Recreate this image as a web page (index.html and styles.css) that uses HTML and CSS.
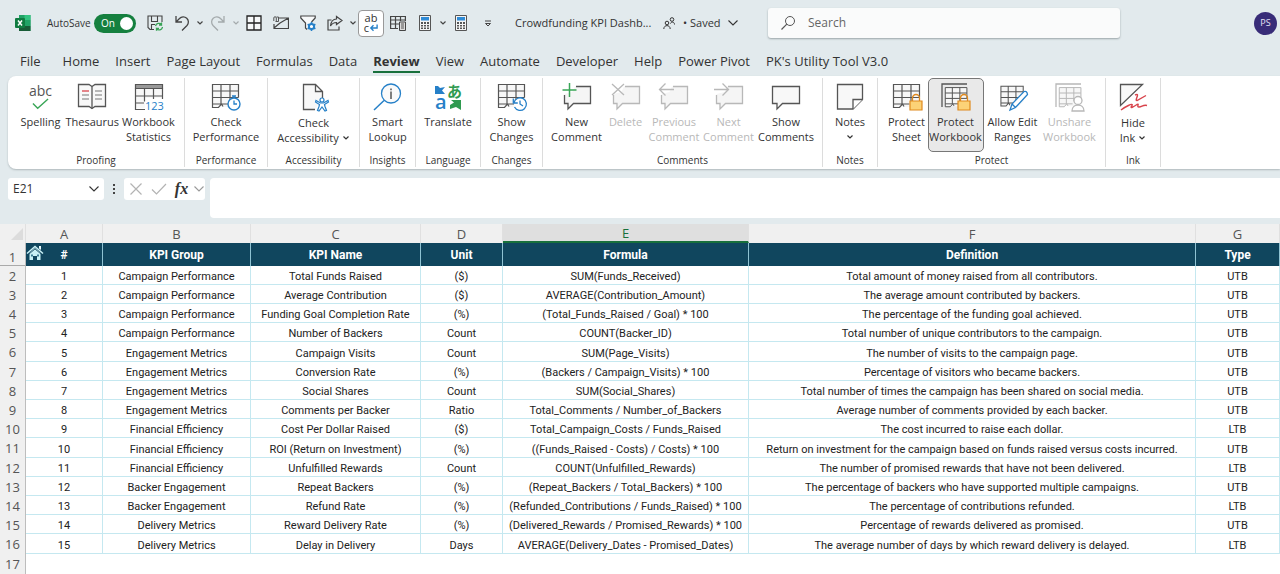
FILE: index.html
```html
<!DOCTYPE html>
<html lang="en">
<head>
<meta charset="utf-8">
<meta name="viewport" content="width=device-width, initial-scale=1">
<title>Crowdfunding KPI Dashboard</title>
<link rel="stylesheet" href="styles.css">
</head>
<body>
<svg class="defs" aria-hidden="true">
  <symbol id="chev" viewBox="0 0 8 8"><path d="M1.500 2.500 4 5l2.500-2.500" fill="none" stroke="currentColor" stroke-width="1.200"/></symbol>
  <symbol id="chev-lg" viewBox="0 0 12 12"><path d="M1.500 3.500 6 8l4.500-4.500" fill="none" stroke="currentColor" stroke-width="1.100"/></symbol>
  <symbol id="calc" viewBox="0 0 16 16"><path d="M2.500.5h11v15h-11z" fill="#f4f4f4" stroke="#555"/><path d="M4 2h8v3.500H4z" fill="#2f8bd6"/><path d="M4 7h2v2H4zm3 0h2v2H7zm3 0h2v2h-2zM4 10h2v1.500H4zm3 0h2v1.500H7zm3 0h2v1.500h-2zM4 12.500h2V14H4zm3 0h2V14H7zm3 0h2V14h-2z" fill="#555"/></symbol>
  <symbol id="grid-cut" viewBox="0 0 30 28"><path d="M2 1h26v18l-5 5H12l-2-1-3 1.500H2z" fill="#f7f7f7"/><path d="M12 23.500 10.500 21l-3 3.500H1.500V1.500h26v13M1.500 8h26M1.500 14.500h26M1.500 21h16M10 1.500V21M19 1.500V18" fill="none" stroke="currentColor" stroke-width="1.200"/></symbol>
  <symbol id="lock" viewBox="0 0 14 18"><path d="M3.500 8V5a3.500 3.500 0 0 1 7 0v3" fill="none" stroke="#e08a1e" stroke-width="1.300"/><path d="M1 8h12v9H1z" fill="#fcd277" stroke="#e08a1e" stroke-width="1.200"/></symbol>
  <symbol id="bubble" viewBox="0 0 30 28"><path d="M1.500 3.500h27v17h-17L6 26v-5.500H1.500z" fill="#f8f8f8" stroke="currentColor" stroke-width="1.300"/></symbol>
  <symbol id="bubble-tag" viewBox="0 0 30 28"><path d="M13 3.500h15.500v17h-17L6 26v-5.500H2.500V11l8-2z" fill="#f5f5f5"/><path d="M14 3.500h14.500v17h-17L6 26v-5.500H2.500V12" fill="none" stroke="currentColor" stroke-width="1.300"/></symbol>
</svg>

<header class="titlebar">
  <svg class="app-logo" viewBox="0 0 16 16" aria-hidden="true"><path d="M4 0h11.500v16H4z" fill="#21a366"/><path d="M9.500 0h6v5h-6z" fill="#33c481"/><path d="M4 5h5.500v6H4z" fill="#107c41"/><path d="M4 11h11.500v5H4z" fill="#185c37"/><path d="M9.500 5h6v6h-6z" fill="#21a366"/><rect y="3" width="10" height="10" rx="1" fill="#107c41"/><path d="m3 5.500 4 5m0-5-4 5" stroke="#fff" stroke-width="1.500"/></svg>
  <label class="autosave" for="autosave">AutoSave</label>
  <span class="switch"><input id="autosave" type="checkbox" role="switch" checked><span class="switch-text">On</span></span>
  <div class="qat">
    <button aria-label="Save"><svg viewBox="0 0 16 16"><path d="M7 14.500H3L1 12.500V1h14v6M4.500 1v5.500h6V1M4.500 14v-4.500H8" fill="none" stroke="#444" stroke-width="1.100"/><path d="M8.500 11a3.500 3.500 0 0 1 6-1.500V7.500m0 2.500h-2.500M15.500 12a3.500 3.500 0 0 1-6 1.800v2m0-2.500H12" fill="none" stroke="#38a356" stroke-width="1.300"/></svg></button>
    <button aria-label="Undo"><svg viewBox="0 0 16 16"><path d="M2 1v6h6M2 7l3.500-3.500a5 5 0 0 1 7.500 7L8 15.500" fill="none" stroke="#444" stroke-width="1.300"/></svg></button>
    <button class="drop" aria-label="Undo options"><svg viewBox="0 0 8 8"><use href="#chev"/></svg></button>
    <button aria-label="Redo" disabled><svg viewBox="0 0 16 16"><path d="M14 1v6H8m6 0-3.500-3.500a5 5 0 0 0-7.500 7L8 15.500" fill="none" stroke="#a4aaac" stroke-width="1.300"/></svg></button>
    <button class="drop" aria-label="Redo options" disabled><svg viewBox="0 0 8 8"><use href="#chev"/></svg></button>
    <button aria-label="Borders"><svg viewBox="0 0 16 16"><path d="M1 1h14v14H1zM8 1v14M1 8h14" fill="#f7f9fa" stroke="#222" stroke-width="1.300"/></svg></button>
    <button aria-label="Email"><svg viewBox="0 0 16 16"><path d="M6 3h9.500v10.500H1V9m0 4 6-5M7 8l8.500-5" fill="none" stroke="#444" stroke-width="1.200"/><path d="M.8 6V3a1.200 1.200 0 0 1 2.500 0v3.500M3.500 2h2v4.500H2.500" fill="none" stroke="#555"/></svg></button>
    <button aria-label="Filter"><svg viewBox="0 0 16 16"><path d="M7 14.500 5.500 13V8L.8 3V1h14.400v2L11.500 7" fill="#f7f9fa" stroke="#444" stroke-width="1.200"/><circle cx="11.500" cy="11.500" r="2.600" fill="#fff" stroke="#2680c8" stroke-width="2"/><path d="M11.500 7v2m0 5v2M7.600 9.200l1.700 1m4.400 2.600 1.700 1M7.600 13.800l1.700-1m4.400-2.600 1.700-1" stroke="#2680c8" stroke-width="1.600"/></svg></button>
    <button aria-label="Share"><svg viewBox="0 0 16 16"><path d="M4.500 5H1v10h11v-3.500M9.500 1.500l5.500 4-5.500 4V7.500C6.500 7.500 5 8.500 3.500 11c.5-4.500 2.500-7 6-7z" fill="none" stroke="#444" stroke-width="1.200"/></svg></button>
    <button class="drop" aria-label="Share options"><svg viewBox="0 0 8 8"><use href="#chev"/></svg></button>
    <button class="qat-active" aria-label="Wrap Text"><span>ab</span><span class="wrap-row">c<svg class="wrap-arrow" viewBox="0 0 10 8"><path d="M9 0v4H2m3-3L2 4l3 3" fill="none" stroke="#2680c8" stroke-width="1.500"/></svg></span></button>
    <button aria-label="Pivot"><svg viewBox="0 0 16 16"><path d="M8 13.500H.6v-12h14.800V6M.6 5h14.800M.6 9H9M5.500 1.500v12M10.500 1.500V6" fill="none" stroke="#444" stroke-width="1.200"/><path d="M9.500 7h6v8.500h-6z" fill="#ddd" stroke="#444"/><path d="M11 9h3m-3 2h3m-3 2h3" stroke="#555"/></svg></button>
    <button aria-label="Calculate Now"><svg viewBox="0 0 16 16"><use href="#calc"/></svg></button>
    <button class="drop" aria-label="Calculation options"><svg viewBox="0 0 8 8"><use href="#chev"/></svg></button>
    <button aria-label="Calculate Sheet"><svg viewBox="0 0 16 16"><use href="#calc"/></svg></button>
    <button aria-label="Customize Quick Access Toolbar"><svg viewBox="0 0 16 16"><path d="M5 6h6M5.500 8.500 8 11l2.500-2.500z" fill="none" stroke="#444"/></svg></button>
  </div>
  <div class="doc">
    <span class="doc-name">Crowdfunding KPI Dashb...</span>
    <svg class="people" viewBox="0 0 12 12" aria-hidden="true"><circle cx="4" cy="6" r="1.800" fill="none" stroke="#333"/><path d="M.8 12c0-4.500 6.400-4.500 6.400 0M7.500 6.500c.5-2 4-2 4 1" fill="none" stroke="#333"/><circle cx="9" cy="2.500" r="1.800" fill="none" stroke="#333"/></svg>
    <button class="saved">• Saved <svg viewBox="0 0 12 12"><use href="#chev-lg"/></svg></button>
  </div>
  <label class="search">
    <svg viewBox="0 0 16 16" aria-hidden="true"><circle cx="10" cy="6" r="4.500" fill="none" stroke="#555"/><path d="M6.800 9.200 1.500 14.500" stroke="#555" stroke-width="1.200"/></svg>
    <input type="text" placeholder="Search" aria-label="Search">
  </label>
  <button class="avatar" aria-label="Account">PS</button>
</header>

<nav class="tabs">
  <a class="file" href="#">File</a><a href="#">Home</a><a href="#">Insert</a><a href="#">Page Layout</a><a href="#">Formulas</a><a href="#">Data</a><a class="current" href="#" aria-current="page">Review</a><a href="#">View</a><a href="#">Automate</a><a href="#">Developer</a><a href="#">Help</a><a href="#">Power Pivot</a><a href="#">PK's Utility Tool V3.0</a>
</nav>

<section class="ribbon" aria-label="Review">
  <div class="group proofing">
    <div class="tools">
      <button class="tool"><span class="abc-icon"><span>abc</span><svg viewBox="0 0 18 12"><path d="m1 5.500 5 5L17 .8" fill="none" stroke="#3aa657" stroke-width="1.500"/></svg></span>Spelling</button>
      <button class="tool"><svg viewBox="0 0 30 28"><path d="M1.500 1.500H12l3 2 3-2h10.500v22H18l-3 2-3-2H1.500z" fill="#f8f8f8" stroke="#555" stroke-width="1.300"/><path d="M15 3.500v22" stroke="#555" stroke-width="1.300"/><path d="M5 12h7m-7 4h7m6-8h7m-7 4h7m-7 4h7" stroke="#777"/><path d="M5 8h7" stroke="#d8434b" stroke-width="1.300"/></svg>Thesaurus</button>
      <button class="tool"><svg viewBox="0 0 30 28"><path d="M2 2h26v13H11v10H2z" fill="#f8f8f8"/><path d="M1.500 1.500h27v4h-27z" fill="#999" stroke="#555" stroke-width="1.200"/><path d="M1.500 5.500v21H11M1.500 13H28M1.500 20H10M10.500 5.500v13M19.500 5.500V16M28.500 5.500V16" fill="none" stroke="#555" stroke-width="1.200"/><text x="11" y="27" class="digits">123</text></svg>Workbook<br>Statistics</button>
    </div>
    <h2>Proofing</h2>
  </div>
  <div class="group performance">
    <div class="tools"><button class="tool"><svg viewBox="0 0 30 28"><use href="#grid-cut" width="30" height="28"/><path d="M23 13v2m-2-2h4" stroke="#2680c8" stroke-width="1.500"/><circle cx="23" cy="21" r="6" fill="#fff" stroke="#2680c8" stroke-width="1.400"/><path d="M23 17.500V21h3" fill="none" stroke="#2680c8" stroke-width="1.300"/></svg>Check<br>Performance</button></div>
    <h2>Performance</h2>
  </div>
  <div class="group accessibility">
    <div class="tools"><button class="tool low"><svg viewBox="0 0 30 28"><path d="M16 26.500H4.500v-25h12l7 7V15M16.500 1.500v7h7" fill="#f8f8f8" stroke="#555" stroke-width="1.300"/><circle cx="23" cy="17" r="2" fill="#fff" stroke="#2680c8" stroke-width="1.200"/><path d="m17 17.500 4.500 2.500h3l4.500-2.500.5 1.500-4 2.500.5 2 1.500 4-1.500.5-3-4-3 4-1.500-.5 1.500-4 .5-2-4-2.500z" fill="#fff" stroke="#2680c8" stroke-width="1.200"/></svg>Check<br>Accessibility <svg class="caret" viewBox="0 0 8 8"><use href="#chev"/></svg></button></div>
    <h2>Accessibility</h2>
  </div>
  <div class="group insights">
    <div class="tools"><button class="tool"><svg viewBox="0 0 30 28"><circle cx="19" cy="10.500" r="9.500" fill="#fafafa" stroke="#2680c8" stroke-width="1.300"/><path d="M12 17.500 2 27" stroke="#2680c8" stroke-width="1.500"/><path d="M19 8.500V16m0-10.500v1.800" stroke="#555" stroke-width="1.500"/></svg>Smart<br>Lookup</button></div>
    <h2>Insights</h2>
  </div>
  <div class="group language">
    <div class="tools"><button class="tool"><svg viewBox="0 0 30 28"><text x="2" y="26" class="latin">a</text><text x="14" y="14" class="kana">あ</text><path d="M2 3h3l2 2 5-1-3 3.500 3 3.500H2z" fill="#2680c8"/><path d="M28 27V17H18l3 2.500-4 2.500v4l6-2z" fill="#2f9a50"/></svg>Translate</button></div>
    <h2>Language</h2>
  </div>
  <div class="group changes">
    <div class="tools"><button class="tool"><svg viewBox="0 0 30 28"><use href="#grid-cut" width="30" height="28"/><circle cx="23" cy="21" r="6" fill="#fff"/><path d="M17 19.500a6.300 6.300 0 1 1 .5 4.500M16.300 15.500v4.500h4.500M23 17.500V21l3 2" fill="none" stroke="#2680c8" stroke-width="1.300"/></svg>Show<br>Changes</button></div>
    <h2>Changes</h2>
  </div>
  <div class="group comments">
    <div class="tools">
      <button class="tool"><svg viewBox="0 0 30 28"><use href="#bubble-tag" width="30" height="28"/><path d="M7.500 0v14M.5 7h14" stroke="#3aa657" stroke-width="1.500"/></svg>New<br>Comment</button>
      <button class="tool" disabled><svg viewBox="0 0 30 28"><use href="#bubble-tag" width="30" height="28"/><path d="m1 1 12 11M13 1 1 12" stroke="currentColor" stroke-width="1.300"/></svg>Delete</button>
      <button class="tool" disabled><svg viewBox="0 0 30 28"><use href="#bubble-tag" width="30" height="28"/><path d="M15 6.500H1m5.500-6-6 6 6 6" fill="none" stroke="currentColor" stroke-width="1.300"/></svg>Previous<br>Comment</button>
      <button class="tool" disabled><svg viewBox="0 0 30 28"><use href="#bubble-tag" width="30" height="28"/><path d="M0 6.500h14m-5.500-6 6 6-6 6" fill="none" stroke="currentColor" stroke-width="1.300"/></svg>Next<br>Comment</button>
      <button class="tool"><svg viewBox="0 0 30 28"><use href="#bubble" width="30" height="28"/></svg>Show<br>Comments</button>
    </div>
    <h2>Comments</h2>
  </div>
  <div class="group notes">
    <div class="tools"><button class="tool"><svg viewBox="0 0 30 28"><path d="M2.500 1.500h25v15l-9.500 9.500H2.500z" fill="#f8f8f8" stroke="#555" stroke-width="1.300"/><path d="M27.500 16.500H18V26" fill="#fff" stroke="#555" stroke-width="1.300"/></svg>Notes<br><svg class="caret" viewBox="0 0 8 8"><use href="#chev"/></svg></button></div>
    <h2>Notes</h2>
  </div>
  <div class="group protect">
    <div class="tools">
      <button class="tool"><svg viewBox="0 0 30 28"><use href="#grid-cut" width="30" height="28"/><use href="#lock" x="17" y="10" width="14" height="18"/></svg>Protect<br>Sheet</button>
      <button class="tool pressed" aria-pressed="true"><svg viewBox="0 0 30 28"><path d="M1 24V1h25" fill="none" stroke="#555" stroke-width="1.300"/><use href="#grid-cut" x="3" y="3" width="25" height="24"/><use href="#lock" x="16" y="10" width="14" height="18"/></svg>Protect<br>Workbook</button>
      <button class="tool"><svg viewBox="0 0 30 28"><use href="#grid-cut" x="1" y="2" width="27" height="24"/><path d="m12 27 2-6L26 8.500q3-1 3.500 3L17.500 24.500zM14 21l3.500 3.500" fill="#fff" stroke="#2680c8" stroke-width="1.300"/></svg>Allow Edit<br>Ranges</button>
      <button class="tool" disabled><svg viewBox="0 0 30 28"><path d="M1 24V1h25" fill="none" stroke="currentColor" stroke-width="1.300"/><use href="#grid-cut" x="3" y="3" width="25" height="24"/><path d="M17 28c0-8 12-8 12 0z" fill="#fff" stroke="currentColor" stroke-width="1.300"/><circle cx="23" cy="17.500" r="4" fill="#fff" stroke="currentColor" stroke-width="1.300"/></svg>Unshare<br>Workbook</button>
    </div>
    <h2>Protect</h2>
  </div>
  <div class="group ink">
    <div class="tools"><button class="tool low"><svg viewBox="0 0 30 28"><path d="M2.500 1.500h22l-22 21z" fill="#f8f8f8" stroke="#555" stroke-width="1.300"/><path d="M17 12c6-3-1 6 2 5.500l9-5M3 27c3-2.500 13-8 11-4.500-3 4 2 1 5-1 3-1.500-1 2.500 2 2.500s4-2.500 8-1.500" fill="none" stroke="#d8434b" stroke-width="1.400"/></svg>Hide<br>Ink <svg class="caret" viewBox="0 0 8 8"><use href="#chev"/></svg></button></div>
    <h2>Ink</h2>
  </div>
</section>

<div class="formula-bar">
  <div class="name-box"><input type="text" value="E21" aria-label="Name box"><button aria-label="Names"><svg viewBox="0 0 12 12"><use href="#chev-lg"/></svg></button></div>
  <svg class="dots" viewBox="0 0 4 12" aria-hidden="true"><path d="M1 1h2v2H1zm0 4h2v2H1zm0 4h2v2H1z" fill="#444"/></svg>
  <div class="entry">
    <button aria-label="Cancel"><svg viewBox="0 0 16 16"><path d="m2.500 2.500 11 11m0-11-11 11" stroke="#b3b3b3" stroke-width="1.200"/></svg></button>
    <button aria-label="Enter"><svg viewBox="0 0 16 16"><path d="m1 8.500 4.500 4.500L15 3" fill="none" stroke="#b3b3b3" stroke-width="1.200"/></svg></button>
    <button class="fx" aria-label="Insert Function">fx</button>
    <button class="entry-drop" aria-label="More functions"><svg viewBox="0 0 12 12"><use href="#chev-lg"/></svg></button>
  </div>
  <textarea aria-label="Formula" rows="1"></textarea>
</div>

<main class="sheet">
<table>
  <colgroup><col class="c-row"><col class="c-a"><col class="c-b"><col class="c-c"><col class="c-d"><col class="c-e"><col class="c-f"><col class="c-g"></colgroup>
  <thead>
    <tr class="letters"><th class="corner"><svg viewBox="0 0 12 12" aria-hidden="true"><path d="M12 0v12H0z" fill="#dcdcdc"/></svg></th><th>A</th><th>B</th><th>C</th><th>D</th><th class="selected">E</th><th>F</th><th>G</th></tr>
    <tr class="titles"><th class="num">1</th><th class="home-cell"><a class="home" href="#" aria-label="Home"><svg viewBox="0 0 18 16"><path d="M3.500 8 9 3l5.500 5v7H11v-4H7v4H3.500z" fill="#c9f1f6"/><path d="M1 8.500 9 1.500l8 7" fill="none" stroke="#c9f1f6" stroke-width="1.500"/><path d="M13 1h2v4l-2-1.500z" fill="#e8fbff"/><path d="M3 9l6-5 6 5" fill="none" stroke="#10465e" stroke-width=".8"/><path d="M5 9.500h2v2H5zm6 0h2v2h-2z" fill="#3d7d93"/></svg></a>#</th><th>KPI Group</th><th>KPI Name</th><th>Unit</th><th>Formula</th><th>Definition</th><th>Type</th></tr>
  </thead>
  <tbody>
    <tr><th>2</th><td>1</td><td>Campaign Performance</td><td>Total Funds Raised</td><td>($)</td><td>SUM(Funds_Received)</td><td>Total amount of money raised from all contributors.</td><td>UTB</td></tr>
    <tr><th>3</th><td>2</td><td>Campaign Performance</td><td>Average Contribution</td><td>($)</td><td>AVERAGE(Contribution_Amount)</td><td>The average amount contributed by backers.</td><td>UTB</td></tr>
    <tr><th>4</th><td>3</td><td>Campaign Performance</td><td>Funding Goal Completion Rate</td><td>(%)</td><td>(Total_Funds_Raised / Goal) * 100</td><td>The percentage of the funding goal achieved.</td><td>UTB</td></tr>
    <tr><th>5</th><td>4</td><td>Campaign Performance</td><td>Number of Backers</td><td>Count</td><td>COUNT(Backer_ID)</td><td>Total number of unique contributors to the campaign.</td><td>UTB</td></tr>
    <tr><th>6</th><td>5</td><td>Engagement Metrics</td><td>Campaign Visits</td><td>Count</td><td>SUM(Page_Visits)</td><td>The number of visits to the campaign page.</td><td>UTB</td></tr>
    <tr><th>7</th><td>6</td><td>Engagement Metrics</td><td>Conversion Rate</td><td>(%)</td><td>(Backers / Campaign_Visits) * 100</td><td>Percentage of visitors who became backers.</td><td>UTB</td></tr>
    <tr><th>8</th><td>7</td><td>Engagement Metrics</td><td>Social Shares</td><td>Count</td><td>SUM(Social_Shares)</td><td>Total number of times the campaign has been shared on social media.</td><td>UTB</td></tr>
    <tr><th>9</th><td>8</td><td>Engagement Metrics</td><td>Comments per Backer</td><td>Ratio</td><td>Total_Comments / Number_of_Backers</td><td>Average number of comments provided by each backer.</td><td>UTB</td></tr>
    <tr><th>10</th><td>9</td><td>Financial Efficiency</td><td>Cost Per Dollar Raised</td><td>($)</td><td>Total_Campaign_Costs / Funds_Raised</td><td>The cost incurred to raise each dollar.</td><td>LTB</td></tr>
    <tr><th>11</th><td>10</td><td>Financial Efficiency</td><td>ROI (Return on Investment)</td><td>(%)</td><td>((Funds_Raised - Costs) / Costs) * 100</td><td>Return on investment for the campaign based on funds raised versus costs incurred.</td><td>UTB</td></tr>
    <tr><th>12</th><td>11</td><td>Financial Efficiency</td><td>Unfulfilled Rewards</td><td>Count</td><td>COUNT(Unfulfilled_Rewards)</td><td>The number of promised rewards that have not been delivered.</td><td>LTB</td></tr>
    <tr><th>13</th><td>12</td><td>Backer Engagement</td><td>Repeat Backers</td><td>(%)</td><td>(Repeat_Backers / Total_Backers) * 100</td><td>The percentage of backers who have supported multiple campaigns.</td><td>UTB</td></tr>
    <tr><th>14</th><td>13</td><td>Backer Engagement</td><td>Refund Rate</td><td>(%)</td><td>(Refunded_Contributions / Funds_Raised) * 100</td><td>The percentage of contributions refunded.</td><td>LTB</td></tr>
    <tr><th>15</th><td>14</td><td>Delivery Metrics</td><td>Reward Delivery Rate</td><td>(%)</td><td>(Delivered_Rewards / Promised_Rewards) * 100</td><td>Percentage of rewards delivered as promised.</td><td>UTB</td></tr>
    <tr><th>16</th><td>15</td><td>Delivery Metrics</td><td>Delay in Delivery</td><td>Days</td><td>AVERAGE(Delivery_Dates - Promised_Dates)</td><td>The average number of days by which reward delivery is delayed.</td><td>LTB</td></tr>
    <tr class="empty"><th>17</th><td colspan="7"></td></tr>
  </tbody>
</table>
</main>
</body>
</html>
```
FILE: styles.css
```css
* { box-sizing: border-box; }
body {
  margin: 0;
  min-height: 100vh;
  overflow-x: hidden;
  background: #e2eaed;
  color: #333;
  font: 11px/16px "Open Sans", "Noto Sans", sans-serif;
}
button {
  padding: 0;
  border: 0;
  background: none;
  color: inherit;
  font: inherit;
}
input, textarea {
  border: 0;
  background: none;
  color: inherit;
  font: inherit;
  outline: none;
}
a { color: inherit; text-decoration: none; }
.defs { display: none; }

/* Title bar */
.titlebar {
  display: flex;
  align-items: center;
  height: 46px;
  padding: 0 3px 0 15px;
}
.app-logo { width: 16px; height: 16px; }
.autosave { width: 47px; margin-left: 16px; font-size: 10px; white-space: nowrap; }
.switch { display: grid; width: 42px; }
.switch > * { grid-area: 1 / 1; }
.switch input {
  appearance: none;
  display: flex;
  align-items: center;
  justify-content: flex-end;
  width: 42px;
  height: 19px;
  margin: 0;
  padding: 3px;
  border-radius: 10px;
  background: #15803f;
}
.switch input::before { content: ""; width: 13px; height: 13px; border-radius: 50%; background: #fff; }
.switch-text { padding-left: 7px; color: #fff; font-size: 10px; line-height: 19px; pointer-events: none; }

.qat { display: flex; align-items: center; gap: 1px; margin-left: 6px; }
.qat button { display: grid; place-items: center; width: 26px; height: 27px; }
.qat svg { width: 16px; height: 16px; }
.qat .drop { width: 8px; color: #444; }
.qat .drop:disabled { color: #a4aaac; }
.qat .drop svg { width: 8px; height: 8px; }
.qat .qat-active {
  align-content: center;
  border: 1px solid #999;
  border-radius: 4px;
  background: #fff;
  font-size: 11px;
  line-height: 10px;
}
.wrap-row { display: flex; align-items: center; }
.qat .wrap-arrow { width: 9px; height: 8px; }

.doc { display: flex; align-items: center; width: 253px; margin-left: 14px; }
.doc-name { width: 148px; white-space: nowrap; }
.people { width: 12px; height: 12px; margin-right: 8px; }
.saved { display: flex; align-items: center; gap: 4px; white-space: pre; }
.saved svg { width: 12px; height: 12px; }

.search {
  display: flex;
  align-items: center;
  gap: 12px;
  flex: 0 1 352px;
  height: 30px;
  padding: 0 12px;
  border-radius: 3px;
  background: #fafbfb;
  box-shadow: 0 1px 2px #9aa5a8;
}
.search svg { width: 16px; height: 16px; }
.search input { flex: 1; min-width: 0; padding: 0; font-size: 12px; }
.search input::placeholder { color: #666; }
.avatar { width: 23px; height: 23px; margin-left: auto; border-radius: 50%; background: #382c78; color: #e6e2f5; font-size: 9px; }

/* Tabs */
.tabs { display: flex; gap: 16px; height: 30px; padding: 5px 0 0 20px; font-size: 13px; line-height: 20px; white-space: nowrap; }
.tabs .file { margin-right: 6px; }
.tabs .current { height: 22px; border-bottom: 2px solid #18703c; font-weight: 700; }

/* Ribbon */
.ribbon {
  display: flex;
  height: 93px;
  margin-left: 8px;
  padding: 2px 0;
  border-radius: 8px 0 0 8px;
  background: #fff;
  box-shadow: 0 1px 2px #aeb8bb;
}
.group { display: flex; flex: none; flex-direction: column; justify-content: space-between; border-right: 1px solid #dcdcdc; }
.group h2 { margin: 0; font-size: 10px; font-weight: 400; line-height: 14px; text-align: center; }
.tools { display: grid; align-items: start; justify-content: center; }
.tool {
  display: block;
  padding: 4px 0 7px;
  border: 1px solid transparent;
  border-radius: 5px;
  line-height: 15px;
  white-space: nowrap;
}
.tool svg { overflow: visible; }
.tool > svg:first-child { display: block; width: 30px; height: 28px; margin: 0 auto 3px; color: #555; }
.tool.low { padding-bottom: 6px; }
.tool.low > svg:first-child { margin-bottom: 4px; }
.tool:disabled, .tool:disabled > svg:first-child { color: #b8b8b8; }
.tool.pressed { border-color: #777; background: #e9e9e9; }
.tool .caret { width: 8px; height: 8px; }
.proofing { width: 177px; }
.proofing .tools { grid-template-columns: 48px 54px 60px; padding-left: 3px; }
.performance { width: 83px; }
.accessibility { width: 92px; }
.insights { width: 56px; }
.language { width: 65px; }
.changes { width: 62px; }
.comments { width: 280px; }
.comments .tools { grid-template-columns: 54px 44px 53px 56px 59px; }
.notes { width: 55px; }
.protect { width: 228px; }
.protect .tools { grid-template-columns: 42px 56px 58px 56px; }
.ink { width: 55px; }
.abc-icon { display: block; height: 31px; color: #555; font-size: 14px; line-height: 15px; }
.abc-icon span, .abc-icon svg { display: block; margin: 0 auto; }
.abc-icon svg { width: 17px; height: 12px; }
.digits { fill: #2680c8; font-size: 11px; }
.latin { fill: #2680c8; font-size: 20px; font-weight: 600; }
.kana { fill: #2f9a50; font: 700 15px "Noto Sans CJK JP", sans-serif; }

/* Formula bar */
.formula-bar { display: flex; align-items: flex-start; height: 55px; padding: 9px 0 0 8px; }
.name-box { display: flex; align-items: center; width: 96px; height: 22px; padding: 0 4px 0 5px; border-radius: 3px; background: #fff; }
.name-box input { flex: 1; min-width: 0; padding: 0; font-size: 12px; }
.name-box svg { display: block; width: 12px; height: 12px; }
.dots { width: 4px; height: 12px; margin: 5px 8px; }
.entry { display: flex; align-items: center; width: 81px; height: 22px; border-radius: 3px; background: #fff; }
.entry button { width: 23px; }
.entry svg { display: block; width: 16px; height: 16px; margin: 0 auto; }
.entry .fx { font: italic 700 16px/20px "Liberation Serif", serif; }
.entry .entry-drop { width: 12px; color: #999; }
.entry .entry-drop svg { width: 12px; height: 12px; }
.formula-bar textarea { flex: 1; height: 40px; margin: 0 0 0 5px; border-radius: 4px 0 0 4px; background: #fff; resize: none; }

/* Worksheet */
.sheet { background: #fff; }
table { width: 100%; table-layout: fixed; border-collapse: separate; border-spacing: 0; color: #222; font-family: Roboto, sans-serif; text-align: center; }
th, td { padding: 0; white-space: nowrap; }
.c-row { width: 26px; }
.c-a { width: 77px; }
.c-b { width: 148px; }
.c-c { width: 170px; }
.c-d { width: 82px; }
.c-e { width: 246px; }
.c-g { width: 84px; }
.letters th { height: 19px; border-right: 1px solid #e0e0e0; background: #f0f0f0; color: #555; font: 13px/18px "Open Sans", sans-serif; }
.letters .selected { border-bottom: 2px solid #18703c; background: #dfdfdf; color: #18703c; line-height: 16px; }
.corner svg { display: block; width: 12px; height: 12px; margin-left: 11px; }
.titles th { height: 23px; border-right: 1px solid #8fc3d3; background: #10465e; color: #fff; font-size: 12px; line-height: 22px; }
.home-cell { position: relative; }
.home { position: absolute; top: 2px; left: 0; }
.home svg { display: block; width: 18px; height: 16px; }
tbody td { height: 19px; padding-top: 3px; border-right: 1px solid #c5e8f0; border-bottom: 1px solid #c5e8f0; font-size: 11px; line-height: 15px; }
tbody th { border-right: 1px solid #bdbdbd; background: #f0f0f0; color: #555; font: 13px/18px "Open Sans", sans-serif; }
.titles .num { padding-top: 6px; border-right: 1px solid #bdbdbd; border-bottom: 1px solid #aaa; background: #f0f0f0; color: #555; font: 13px/16px "Open Sans", sans-serif; }
tbody tr:nth-child(5n) td { height: 20px; }
tbody .empty td { height: 20px; border: 0; }
```
